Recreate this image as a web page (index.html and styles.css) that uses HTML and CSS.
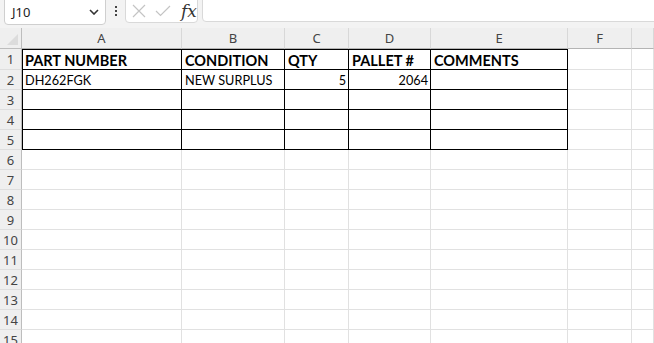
FILE: index.html
```
<!DOCTYPE html>
<html lang="en">
<head>
  <meta charset="UTF-8" />
  <title>Sheet1</title>
  <link rel="stylesheet" href="styles.css">
</head>
<body>
  <div class="toolbar">
    <div class="name-box">
      <span class="name-text">J10</span>
      <svg class="chevron" width="10" height="6" viewBox="0 0 10 6"><path d="M1 1 L5 5 L9 1" fill="none" stroke="#333" stroke-width="1.6"/></svg>
    </div>
    <div class="dots"><span></span><span></span><span></span></div>
    <div class="fx-box">
      <svg width="14" height="14" viewBox="0 0 14 14"><path d="M1 1 L13 13 M13 1 L1 13" stroke="#c4c4c4" stroke-width="1.2" fill="none"/></svg>
      <svg width="16" height="12" viewBox="0 0 16 12"><path d="M1 6 L5.5 10.5 L15 1" stroke="#c4c4c4" stroke-width="1.2" fill="none"/></svg>
      <span class="fx">fx</span>
    </div>
    <div class="formula-box"></div>
  </div>

  <div class="sheet" id="sheet"></div>

  <script>
    const cols = ['A', 'B', 'C', 'D', 'E', 'F', ''];
    const data = [
      ['PART NUMBER', 'CONDITION', 'QTY', 'PALLET #', 'COMMENTS'],
      ['DH262FGK', 'NEW SURPLUS', '5', '2064', ''],
      ['', '', '', '', ''],
      ['', '', '', '', ''],
      ['', '', '', '', '']
    ];
    const sheet = document.getElementById('sheet');

    function addCell(cls, text) {
      const div = document.createElement('div');
      div.className = cls;
      div.textContent = text || '';
      sheet.appendChild(div);
      return div;
    }

    addCell('corner');
    cols.forEach(c => addCell('col-head', c));

    for (let r = 1; r <= 15; r++) {
      addCell('row-head', r);
      for (let c = 0; c < cols.length; c++) {
        let cls = 'cell';
        let text = '';
        if (r <= 5 && c < 5) {
          cls += ' boxed';
          if (r === 1) cls += ' top bold';
          if (c === 0) cls += ' left';
          text = data[r - 1][c];
          if (r > 1 && /^\d+$/.test(text)) cls += ' num';
        }
        addCell(cls, text);
      }
    }
  </script>
</body>
</html>
```

FILE: styles.css
```
* {
  margin: 0;
  padding: 0;
  box-sizing: border-box;
}

body {
  width: 654px;
  height: 343px;
  overflow: hidden;
  background: #f3f3f3;
  font-family: 'Noto Sans', 'Open Sans', sans-serif;
}

.toolbar {
  display: flex;
  align-items: flex-start;
  height: 28px;
  padding-left: 4px;
}

.name-box {
  display: flex;
  align-items: center;
  justify-content: space-between;
  width: 102px;
  height: 30px;
  margin-top: -5px;
  padding: 4px 6px 0 7px;
  background: #fff;
  border: 1px solid #cfcfcf;
  border-radius: 4px;
}

.name-text {
  font-size: 13px;
  color: #222;
}

.dots {
  display: flex;
  flex-direction: column;
  gap: 2px;
  margin: 6px 8px 0 9px;
}

.dots span {
  width: 2px;
  height: 2px;
  background: #444;
}

.fx-box {
  display: flex;
  align-items: center;
  gap: 9px;
  width: 73px;
  height: 28px;
  margin-top: -5px;
  padding: 4px 0 0 6px;
  background: #fff;
  border: 1px solid #d9d9d9;
  border-radius: 4px;
}

.fx {
  font-family: 'DejaVu Serif', 'Liberation Serif', serif;
  font-style: italic;
  font-size: 17px;
  color: #333;
  margin-left: 1px;
  line-height: 1;
}

.formula-box {
  flex: 1;
  height: 27px;
  margin: -5px -6px 0 4px;
  background: #fff;
  border: 1px solid #d9d9d9;
  border-radius: 4px;
}

.sheet {
  display: grid;
  grid-template-columns: 22px 160px 103px 64px 82px 137px 64px 1fr;
  grid-template-rows: 21px 21px;
  grid-auto-rows: 20px;
  background: #fff;
}

.corner {
  position: relative;
  background: #efefef;
  border-right: 1px solid #bdbdbd;
  border-bottom: 1px solid #bdbdbd;
}

.corner::after {
  content: '';
  position: absolute;
  right: 3px;
  bottom: 3px;
  border-style: solid;
  border-width: 0 0 11px 11px;
  border-color: transparent transparent #dcdcdc transparent;
}

.col-head {
  background: #efefef;
  border-right: 1px solid #d8d8d8;
  border-bottom: 1px solid #b4b4b4;
  font-size: 13px;
  color: #444;
  text-align: center;
  line-height: 21px;
}

.row-head {
  background: #efefef;
  border-right: 1px solid #bdbdbd;
  border-bottom: 1px solid #dedede;
  font-size: 13px;
  color: #444;
  text-align: center;
  line-height: 20px;
}

.cell {
  display: flex;
  align-items: flex-end;
  padding: 0 2px 1px 3px;
  border-right: 1px solid #e1e1e1;
  border-bottom: 1px solid #e1e1e1;
  font-family: Lato, 'Liberation Sans', sans-serif;
  font-size: 12.7px;
  line-height: 16px;
  color: #000;
  white-space: nowrap;
  overflow: hidden;
}

.cell.boxed {
  border-right-color: #000;
  border-bottom-color: #000;
}

.cell.left {
  box-shadow: inset 1px 0 0 #000;
}

.cell.top {
  box-shadow: inset 0 1px 0 #000;
}

.cell.top.left {
  box-shadow: inset 1px 1px 0 #000;
}

.cell.bold {
  font-weight: bold;
  font-size: 14.5px;
  line-height: 17px;
  padding-bottom: 0;
}

.cell.num {
  justify-content: flex-end;
}
```
